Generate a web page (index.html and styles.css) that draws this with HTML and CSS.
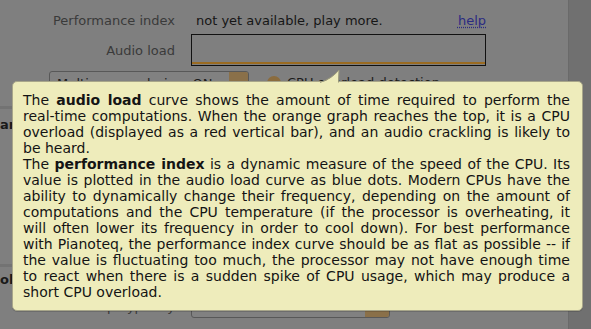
FILE: index.html
```html
<!DOCTYPE html>
<html>
<head>
<meta charset="utf-8">
<link rel="stylesheet" href="styles.css">
</head>
<body>
<div class="app">
  <div class="main">
    <div class="row row-perf">
      <span class="label">Performance index</span>
      <span class="value">not yet available, play more.</span>
      <a class="help">help</a>
    </div>
    <div class="row row-load">
      <span class="label">Audio load</span>
      <div class="graph"><div class="graph-line"></div></div>
    </div>
    <div class="row row-opts">
      <div class="combo combo-multi">
        <span class="combo-text">Multicore rendering: ON</span>
        <span class="combo-btn"><span class="arrow-up"></span></span>
      </div>
      <span class="radio"></span>
      <span class="opt-text">CPU overload detection</span>
    </div>
    <div class="band"></div>
    <div class="section-row sec-a">
      <span class="sec-title">ar</span>
    </div>
    <div class="spacer"></div>
    <div class="band"></div>
    <div class="section-row sec-b">
      <span class="sec-title">ol</span>
    </div>
    <div class="row row-poly">
      <span class="label">Maximum polyphony</span>
      <div class="combo combo-poly">
        <span class="combo-text">256</span>
        <span class="combo-btn"><span class="arrow-down"></span></span>
      </div>
    </div>
  </div>
  <div class="side"></div>
</div>

<div class="tooltip">
  <svg class="pointer" width="30" height="16" viewBox="0 0 30 16">
    <path d="M2 14 Q 14 10 21 1 L 20 14 Z" fill="#eeecbb"/>
    <path d="M2 13.5 Q 14 9.5 21 1 L 20.5 13.5" fill="none" stroke="#9c9a7c" stroke-width="1"/>
  </svg>
  <div class="tip-text">
    <span class="ln">The <b>audio load</b> curve shows the amount of time required to perform the</span>
    <span class="ln">real-time computations. When the orange graph reaches the top, it is a CPU</span>
    <span class="ln">overload (displayed as a red vertical bar), and an audio crackling is likely to</span>
    <span class="ln end">be heard.</span>
    <span class="ln">The <b>performance index</b> is a dynamic measure of the speed of the CPU. Its</span>
    <span class="ln">value is plotted in the audio load curve as blue dots. Modern CPUs have the</span>
    <span class="ln">ability to dynamically change their frequency, depending on the amount of</span>
    <span class="ln">computations and the CPU temperature (if the processor is overheating, it</span>
    <span class="ln">will often lower its frequency in order to cool down). For best performance</span>
    <span class="ln">with Pianoteq, the performance index curve should be as flat as possible -- if</span>
    <span class="ln">the value is fluctuating too much, the processor may not have enough time</span>
    <span class="ln">to react when there is a sudden spike of CPU usage, which may produce a</span>
    <span class="ln end">short CPU overload.</span>
  </div>
</div>
</body>
</html>
```

FILE: styles.css
```css
html, body {
  margin: 0;
  padding: 0;
}
body {
  width: 591px;
  height: 329px;
  overflow: hidden;
  background: #7f7f7f;
  font-family: "DejaVu Sans", "Liberation Sans", sans-serif;
  font-size: 13px;
  color: #161616;
  position: relative;
}
.app {
  display: flex;
  height: 329px;
}
.main {
  flex: 1;
  padding-top: 12px;
  display: flex;
  flex-direction: column;
}
.side {
  width: 22px;
  background: #707070;
  border-left: 1px solid #6a6a6a;
}
.row {
  display: flex;
  align-items: center;
}
.label {
  width: 175px;
  text-align: right;
  color: #3a3a3a;
  flex-shrink: 0;
  white-space: nowrap;
}
.row-perf {
  height: 16px;
  width: 486px;
}
.row-perf .value {
  margin-left: 21px;
  flex: 1;
  white-space: nowrap;
}
.help {
  color: #2b2b82;
  text-decoration: underline dotted;
  text-underline-offset: 2px;
}
.row-load {
  margin-top: 6px;
  height: 32px;
}
.graph {
  margin-left: 16px;
  width: 295px;
  height: 32px;
  box-sizing: border-box;
  border: 1px solid #111;
  background: #7f7f7f;
  display: flex;
  flex-direction: column;
  justify-content: flex-end;
}
.graph-line {
  height: 2px;
  background: #9a6b22;
  margin-bottom: 1px;
}
.row-opts {
  margin-top: 5px;
  height: 24px;
  align-items: flex-start;
}
.combo {
  box-sizing: border-box;
  height: 25px;
  border: 1px solid #585858;
  border-radius: 3px;
  display: flex;
  align-items: stretch;
  background: #818181;
}
.combo-multi {
  margin-left: 49px;
  width: 200px;
}
.combo-text {
  flex: 1;
  padding-left: 7px;
  line-height: 23px;
  white-space: nowrap;
  overflow: hidden;
  color: #1c1c1c;
}
.combo-btn {
  width: 19px;
  background: #8a7049;
  border-radius: 0 2px 2px 0;
  display: flex;
  align-items: center;
  justify-content: center;
}
.arrow-up {
  width: 0;
  height: 0;
  border-left: 4px solid transparent;
  border-right: 4px solid transparent;
  border-bottom: 5px solid #2a2416;
}
.arrow-down {
  width: 0;
  height: 0;
  border-left: 3px solid transparent;
  border-right: 3px solid transparent;
  border-top: 4px solid #2a2416;
}
.radio {
  width: 14px;
  height: 14px;
  border-radius: 50%;
  background: #8b6c3e;
  margin-left: 18px;
  margin-top: 5px;
}
.opt-text {
  margin-left: 6px;
  line-height: 24px;
  color: #1c1c1c;
}
.band {
  margin-top: 11px;
  height: 3px;
  background: #737373;
}
.section-row {
  height: 16px;
  display: flex;
  align-items: center;
}
.sec-a {
  margin-top: 7px;
}
.sec-title {
  white-space: nowrap;
  font-weight: bold;
  color: #1a1a1a;
}
.spacer {
  height: 121px;
}
.sec-b {
  margin-top: 4px;
}
.row-poly {
  margin-top: 7px;
  height: 24px;
}
.combo-poly {
  margin-left: 16px;
  width: 199px;
  height: 24px;
}
.combo-poly .combo-btn {
  width: 24px;
}

.tooltip {
  position: absolute;
  left: 12px;
  top: 81px;
  width: 571px;
  height: 230px;
  box-sizing: border-box;
  background: #eeecbb;
  border: 1px solid #a8a68a;
  border-radius: 5px;
  padding: 10px 12px 10px 10px;
  box-shadow: 0 1px 0 rgba(0,0,0,0.15);
  color: #141414;
  font-size: 14px;
  line-height: 16px;
}
.pointer {
  position: absolute;
  left: 305px;
  top: -13px;
  overflow: visible;
}
.tip-text {
  width: 547px;
}
.ln {
  display: block;
  white-space: nowrap;
  text-align: justify;
  text-align-last: justify;
}
.ln.end {
  text-align-last: left;
}
.ln b {
  font-weight: bold;
}
```
